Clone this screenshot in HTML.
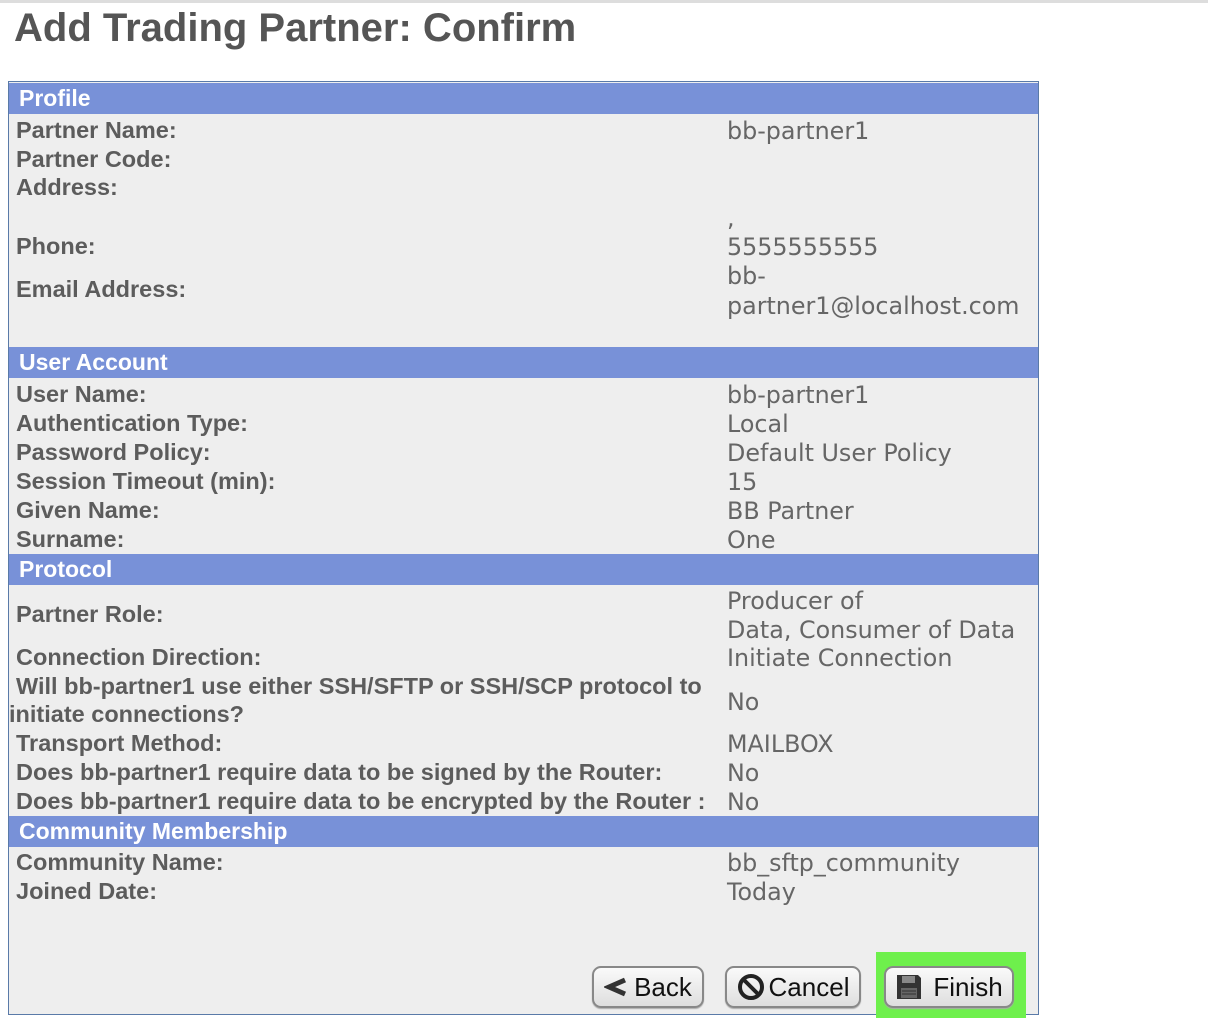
<!DOCTYPE html>
<html><head><meta charset="utf-8"><style>
html,body{margin:0;padding:0;background:#fff;width:1208px;height:1032px;overflow:hidden;position:relative}
.t{position:absolute;white-space:nowrap;line-height:26px;height:26px;margin-top:0}
.title{position:absolute;left:14px;top:6px;font:bold 40px "Liberation Sans",sans-serif;color:#555;line-height:44px}
.topline{position:absolute;left:0;top:0;width:1208px;height:3px;background:#ddd}
.panel{position:absolute;left:8px;top:81px;width:1029px;height:932px;background:#eee;border:1px solid #5a7aa8}
.hd{position:absolute;left:9px;width:1029px;height:31px;background:#7891d8;color:#fff;font:bold 23px "Liberation Sans",sans-serif;line-height:31px;text-indent:10px}
.l{font:bold 23.5px "Liberation Sans",sans-serif;color:#5c5c5c;left:16px}
.v{font:23.8px "DejaVu Sans",sans-serif;color:#666;left:727px}
.btn{position:absolute;top:966px;height:42px;border:2px solid #888;border-radius:9px;background:linear-gradient(#fafafa,#dedede);box-sizing:border-box;font:26px "Liberation Sans",sans-serif;color:#111;line-height:38px;display:flex;align-items:center;justify-content:center;gap:6px;box-shadow:0 1px 1px #aaa}
.green{position:absolute;left:876px;top:952px;width:150px;height:66px;background:#6ef04c}
</style></head><body>
<div class="topline"></div>
<div class="title">Add Trading Partner: Confirm</div>
<div class="panel"></div>
<div class="hd" style="top:83px">Profile</div>
<div class="t l" style="top:117px">Partner Name:</div><div class="t v" style="top:117px">bb-partner1</div>
<div class="t l" style="top:146px">Partner Code:</div>
<div class="t l" style="top:174px">Address:</div>
<div class="t v" style="top:204px">,</div>
<div class="t l" style="top:233px">Phone:</div><div class="t v" style="top:233px">5555555555</div>
<div class="t l" style="top:276px">Email Address:</div>
<div class="t v" style="top:262px">bb-</div><div class="t v" style="top:292px">partner1@localhost.com</div>

<div class="hd" style="top:347px">User Account</div>
<div class="t l" style="top:381px">User Name:</div><div class="t v" style="top:381px">bb-partner1</div>
<div class="t l" style="top:410px">Authentication Type:</div><div class="t v" style="top:410px">Local</div>
<div class="t l" style="top:439px">Password Policy:</div><div class="t v" style="top:439px">Default User Policy</div>
<div class="t l" style="top:468px">Session Timeout (min):</div><div class="t v" style="top:468px">15</div>
<div class="t l" style="top:497px">Given Name:</div><div class="t v" style="top:497px">BB Partner</div>
<div class="t l" style="top:526px">Surname:</div><div class="t v" style="top:526px">One</div>

<div class="hd" style="top:554px">Protocol</div>
<div class="t l" style="top:601px">Partner Role:</div>
<div class="t v" style="top:587px">Producer of</div><div class="t v" style="top:616px">Data, Consumer of Data</div>
<div class="t l" style="top:644px">Connection Direction:</div><div class="t v" style="top:644px">Initiate Connection</div>
<div class="t l" style="top:673px">Will bb-partner1 use either SSH/SFTP or SSH/SCP protocol to</div>
<div class="t l" style="top:701px;left:9px">initiate connections?</div>
<div class="t v" style="top:688px">No</div>
<div class="t l" style="top:730px">Transport Method:</div><div class="t v" style="top:730px">MAILBOX</div>
<div class="t l" style="top:759px">Does bb-partner1 require data to be signed by the Router:</div><div class="t v" style="top:759px">No</div>
<div class="t l" style="top:788px">Does bb-partner1 require data to be encrypted by the Router :</div><div class="t v" style="top:788px">No</div>

<div class="hd" style="top:816px">Community Membership</div>
<div class="t l" style="top:849px">Community Name:</div><div class="t v" style="top:849px">bb_sftp_community</div>
<div class="t l" style="top:878px">Joined Date:</div><div class="t v" style="top:878px">Today</div>

<div class="green"></div>
<div class="btn" style="left:592px;width:112px"><svg width="24" height="20" viewBox="0 0 24 20"><path d="M21 3 L5 10 L21 17" fill="none" stroke="#333" stroke-width="5" stroke-linejoin="miter"/></svg>Back</div>
<div class="btn" style="left:725px;width:136px;gap:4px"><svg width="28" height="28" viewBox="0 0 28 28"><circle cx="14" cy="14" r="11" fill="none" stroke="#222" stroke-width="4"/><path d="M7 7 L21 21" stroke="#222" stroke-width="4"/></svg>Cancel</div>
<div class="btn" style="left:884px;width:130px;gap:10px"><svg width="28" height="28" viewBox="0 0 28 28"><path d="M2 2 H23 L26 5 V26 H2 Z" fill="#333"/><rect x="7" y="3" width="13" height="7" fill="#888"/><rect x="6" y="15" width="16" height="10" fill="#666"/><path d="M7 18 H21 M7 21 H21" stroke="#333" stroke-width="1"/></svg>Finish</div>
</body></html>
